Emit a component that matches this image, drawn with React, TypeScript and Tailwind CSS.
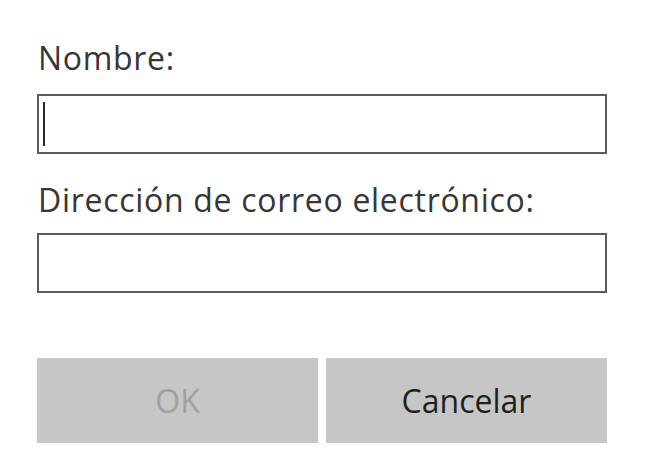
export default function App() {
  return (
    <div
      className="w-[650px] h-[465px] bg-white pl-[37px] pt-[38px] text-[#363636]"
      style={{ fontFamily: '"Open Sans", "Segoe UI", sans-serif' }}
    >
      <div className="w-[570px]">
        <label className="block text-[32px] leading-[40px] tracking-[0.7px] pl-[1px]">Nombre:</label>
        <div className="mt-[16px] h-[60px] border-2 border-[#5c5c5c] bg-white flex items-center pl-[4px]">
          <span className="block w-[2px] h-[44px] bg-[#2a2a2a]" />
        </div>

        <label className="block mt-[26px] text-[32px] leading-[40px] tracking-[0.7px] pl-[1px]">
          Dirección de correo electrónico:
        </label>
        <div className="mt-[13px] h-[60px] border-2 border-[#5c5c5c] bg-white" />

        <div className="mt-[65px] flex gap-[8px]">
          <button
            disabled
            className="h-[85px] w-[281px] bg-[#c6c6c6] text-[32px] text-[#a0a0a0] flex items-center justify-center"
          >
            OK
          </button>
          <button className="h-[85px] w-[281px] bg-[#c6c6c6] text-[32px] text-[#1f1f1f] flex items-center justify-center">
            Cancelar
          </button>
        </div>
      </div>
    </div>
  );
}
